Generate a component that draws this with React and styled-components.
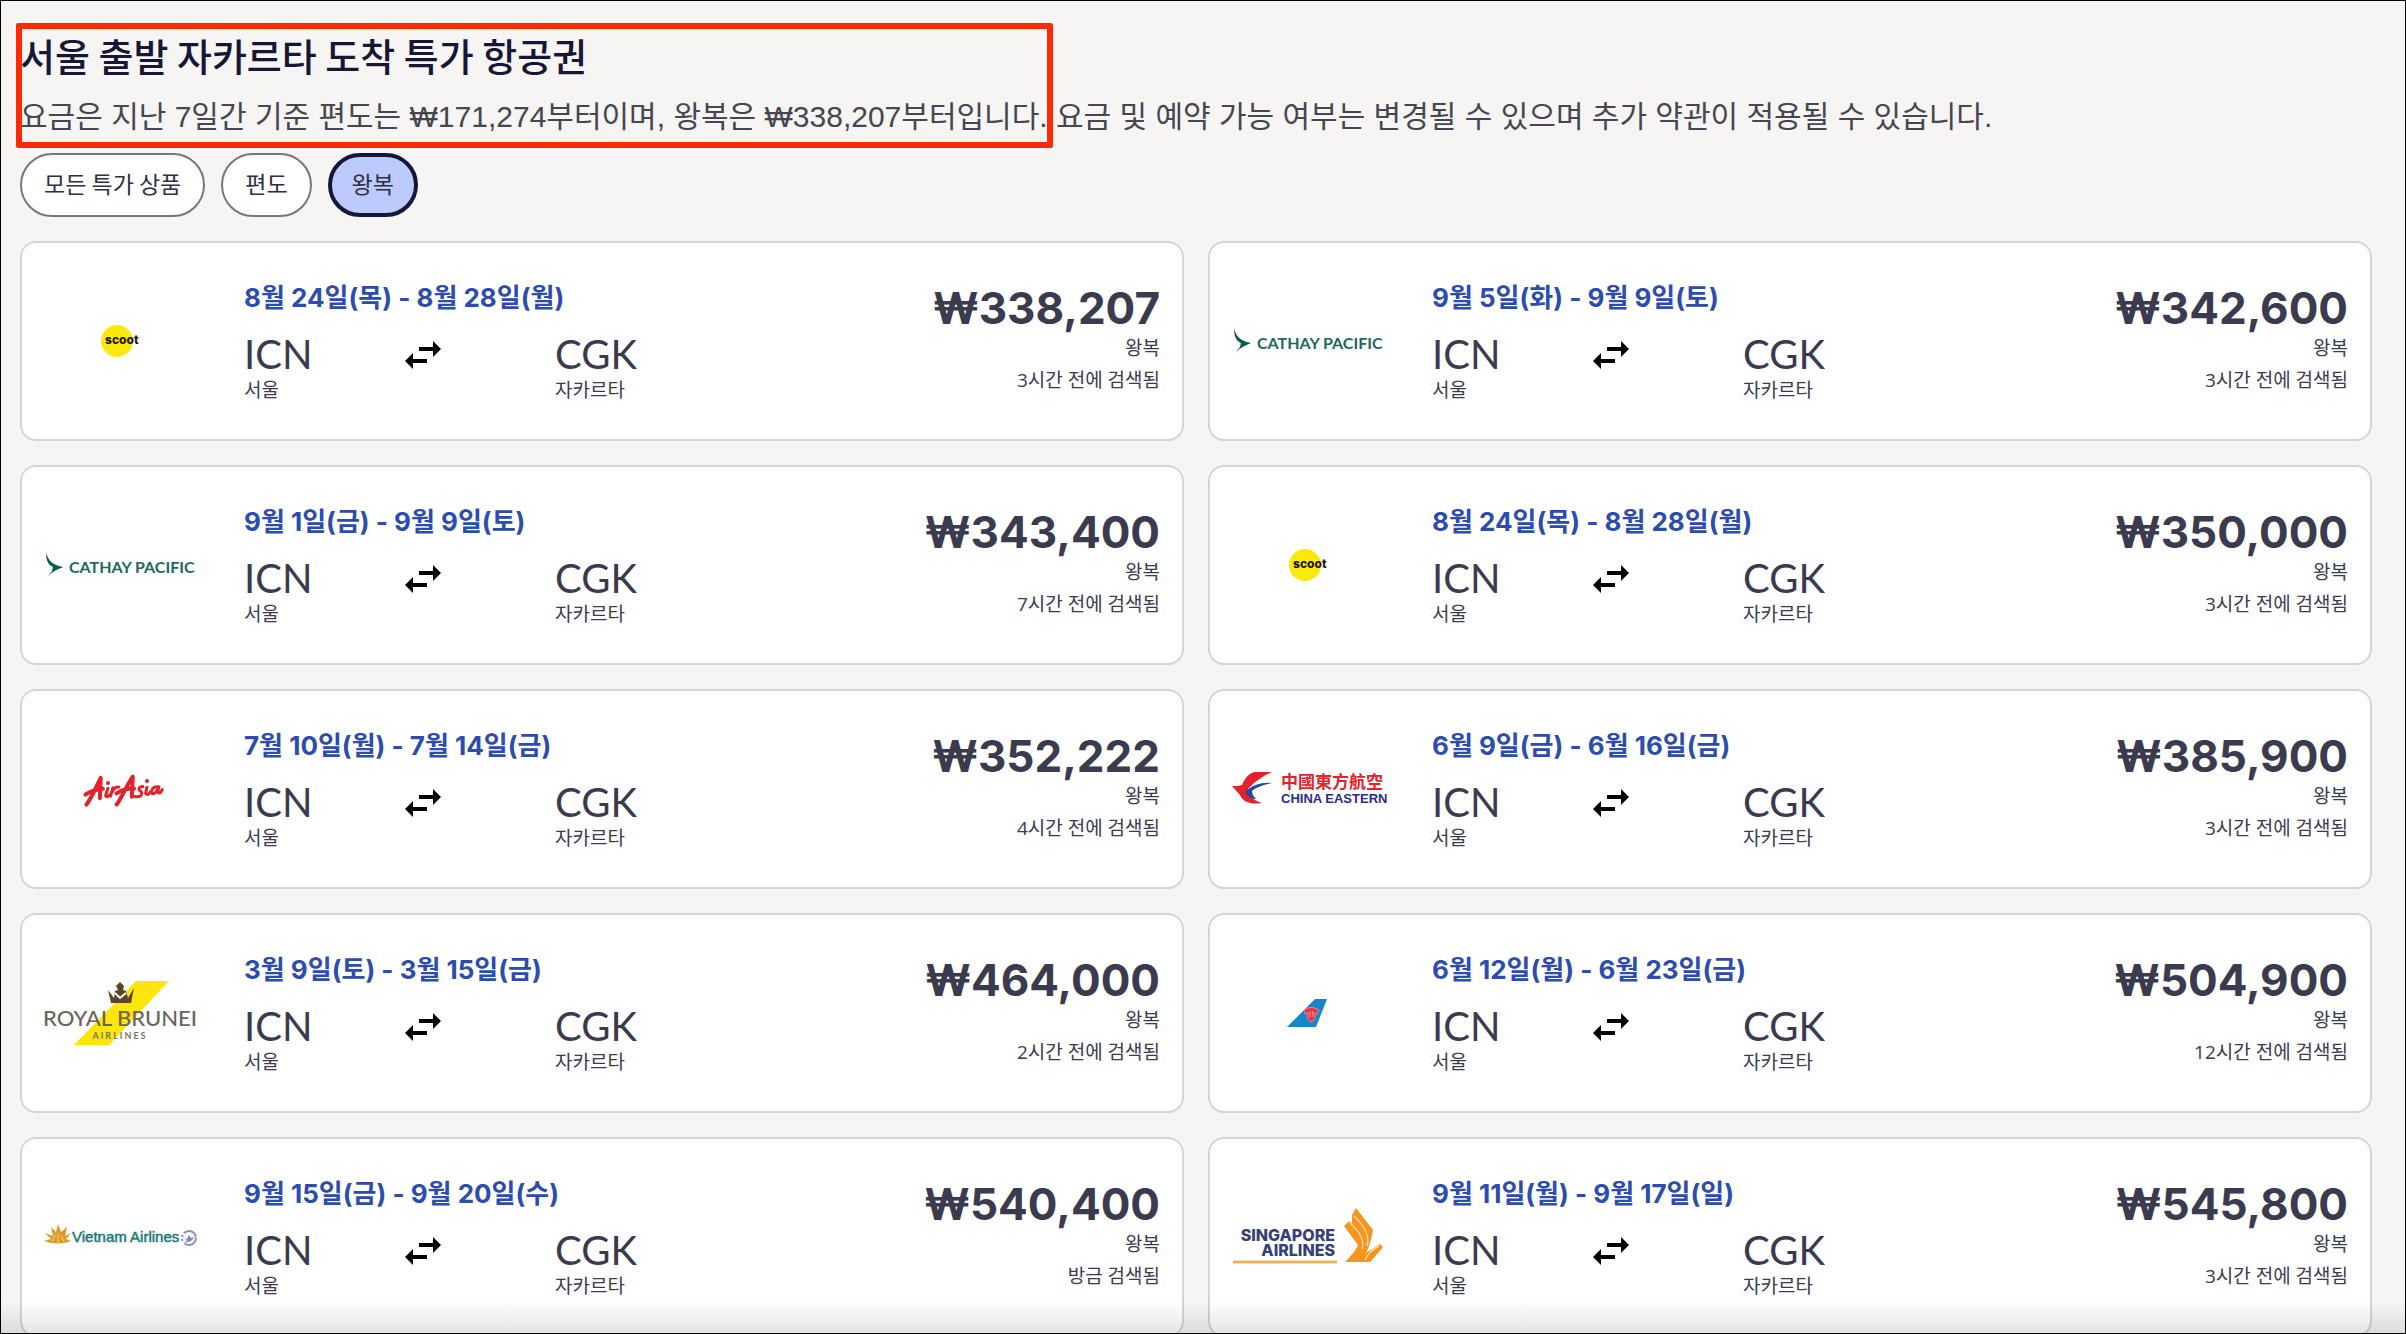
import React, { useState } from "react";
import styled, { createGlobalStyle } from "styled-components";

const GlobalStyle = createGlobalStyle`
  *, *::before, *::after {
    box-sizing: border-box;
  }

  body {
    margin: 0;
    background-color: #f6f5f4;
    color: #3a3b4e;
    font-family: Inter, "Noto Sans CJK KR", sans-serif;
  }
`;

// Styled Components
const Page = styled.main`
  position: relative;
  height: 100vh;
  padding: 30px 33px 0 19px;
  border: 1px solid #000;
  overflow: hidden;
`;

const BottomFade = styled.div`
  position: absolute;
  left: 0;
  right: 0;
  bottom: 0;
  height: 32px;
  background: linear-gradient(rgba(0, 0, 0, 0), rgba(0, 0, 0, 0.1));
  pointer-events: none;
`;

const Header = styled.header`
  position: relative;
  display: flex;
  flex-direction: column;
  gap: 18px;
`;

const Highlight = styled.div`
  position: absolute;
  top: -8px;
  left: -4px;
  width: 1037px;
  height: 125px;
  border: 6px solid #fc2b06;
  border-radius: 2px;
  pointer-events: none;
`;

const Title = styled.h2`
  margin: 0;
  font-family: "Noto Sans CJK KR", sans-serif;
  font-size: 38px;
  line-height: 48px;
  font-weight: 500;
  color: #161636;
`;

const Description = styled.p`
  margin: 0;
  font-family: "Liberation Sans", "Noto Sans CJK KR", sans-serif;
  font-size: 30px;
  line-height: 40px;
  color: #45464f;
`;

const Filters = styled.div`
  display: flex;
  gap: 16px;
  margin: 16px 0 24px;
`;

const Pill = styled.button`
  height: 64px;
  padding: 0 ${({ $active }) => ($active ? 20 : 22)}px 4px;
  border: ${({ $active }) => ($active ? "4px solid #14163c" : "2px solid #77777b")};
  border-radius: 32px;
  background-color: ${({ $active }) => ($active ? "#bccbfb" : "#fff")};
  color: #2f3043;
  font-family: "Noto Sans CJK KR", sans-serif;
  font-size: 23px;
  cursor: pointer;
`;

const Deals = styled.ul`
  display: grid;
  grid-template-columns: 1fr 1fr;
  gap: 24px;
  margin: 0;
  padding: 0;
  list-style: none;
`;

const Card = styled.li`
  display: flex;
  align-items: center;
  height: 200px;
  padding: 0 22px;
  border: 2px solid #d6d5d5;
  border-radius: 16px;
  background-color: #fff;
`;

const Logo = styled.svg`
  flex: none;
  width: 152px;
  height: 80px;
  margin-right: 48px;
  overflow: visible;
`;

const Trip = styled.div`
  flex: 1;
  padding-top: 4px;
`;

const Dates = styled.h3`
  margin: 0 0 16px;
  font-size: 26px;
  line-height: 36px;
  font-weight: 700;
  color: #2c4cae;
`;

const Route = styled.div`
  display: grid;
  grid-template-columns: 160px 151px auto;
  justify-content: start;
`;

const Code = styled.div`
  font-family: Lato, sans-serif;
  font-size: 40px;
  line-height: 44px;
`;

const City = styled.div`
  font-size: 19px;
  line-height: 30px;
`;

const Arrows = styled.svg`
  width: 38px;
  height: 44px;
`;

const Fare = styled.div`
  padding-bottom: 2px;
  text-align: right;
`;

const Price = styled.div`
  font-size: 44px;
  line-height: 48px;
  font-weight: 700;
`;

const Note = styled.div`
  font-family: "Open Sans", "Noto Sans CJK KR", sans-serif;
  font-size: 19px;
  line-height: 32px;
`;

const Scoot = () => (
  <Logo viewBox="0 0 152 80" role="img" aria-label="Scoot">
    <circle cx="73" cy="40" r="16" fill="#fbe90b" />
    <text x="61" y="43" fontSize="12" fontWeight="800" fontFamily="Inter" fill="#1d1b12">
      scoot
    </text>
  </Logo>
);

const Cathay = () => (
  <Logo viewBox="0 0 152 80" role="img" aria-label="Cathay Pacific">
    <path d="M2 27 C4 36 9 40 19 42 C13 43 9 47 4 51 C8 46 11 43 9 42 C4 40 2 35 2 27 Z" fill="#0b5c50" />
    <path d="M9 41 L19 42 L8 47 Z" fill="#0b5c50" />
    <text x="25" y="48" fontSize="16" fontWeight="700" fontFamily="Lato" fill="#1c6a5c">
      CATHAY PACIFIC
    </text>
  </Logo>
);

const AirAsia = () => (
  <Logo viewBox="0 0 152 80" role="img" aria-label="AirAsia">
    <g transform="rotate(-6 76 40)" fill="none" stroke="#e3222b" strokeWidth="3" strokeLinecap="round" strokeLinejoin="round">
      <path d="M41 52 C47 46 52 36 58 27 L55 47 M41 42 C48 38 54 38 59 38" strokeWidth="4" />
      <path d="M64 38 L61 45 Q62 48 66 44 M69 38 L66 46 M68 42 Q71 37 75 38" />
      <path d="M71 55 C77 49 82 38 90 29 L87 49 M72 44 C78 41 84 40 90 41" strokeWidth="4" />
      <path d="M99 40 Q94 40 95 43 Q99 46 96 49 Q93 50 90 49 M103 41 L101 47 Q103 50 106 46" />
      <path d="M115 42 Q109 40 107 46 Q108 51 113 45 L115 42 L113 47 Q115 50 118 45" />
    </g>
    <circle cx="64" cy="34" r="2" fill="#e3222b" />
    <circle cx="103" cy="32" r="2" fill="#e3222b" />
  </Logo>
);

const ChinaEastern = () => (
  <Logo viewBox="0 0 152 80" role="img" aria-label="China Eastern">
    <path d="M40 23 C31 27 22 33 16 40 C17 47 22 52 30 54 C19 56 11 53 8 46 L0 37 C4 37 8 37 10 36 C13 29 17 24 23 23 Z" fill="#e3222b" />
    <path d="M40 34 C30 33 20 36 13 43 C16 48 20 50 24 50 C21 47 20 44 20 42 C25 38 31 36 40 34 Z" fill="#24489d" />
    <text x="49" y="39" fontSize="17" fontWeight="700" fontFamily="'Noto Sans CJK TC'" fill="#e3222b">
      中國東方航空
    </text>
    <text x="49" y="54" fontSize="13" fontWeight="700" fontFamily="'Liberation Sans'" fill="#2a2c8a">
      CHINA EASTERN
    </text>
  </Logo>
);

const RoyalBrunei = () => (
  <Logo viewBox="0 0 152 80" role="img" aria-label="Royal Brunei Airlines">
    <path d="M92 8 L125 8 L65 72 L30 72 Z" fill="#fbe50a" />
    <path d="M64 17 L70 25 L71 18 L74 17 L72 13 L76 9 L80 13 L79 17 L82 18 L84 25 L90 15 L87 30 L67 30 Z" fill="#5a4526" />
    <path d="M71 20 L76 25 L82 20" fill="none" stroke="#fff" strokeWidth="2" />
    <text x="76" y="53" textAnchor="middle" fontSize="22" fontWeight="500" fontFamily="Lato" fill="#6b645a">
      ROYAL BRUNEI
    </text>
    <text x="76" y="66" textAnchor="middle" fontSize="9" fontWeight="700" letterSpacing="2" fontFamily="Lato" fill="#7d7360">
      AIRLINES
    </text>
  </Logo>
);

const ChinaSouthern = () => (
  <Logo viewBox="0 0 152 80" role="img" aria-label="China Southern">
    <path d="M83 26 L95 26 L84 54 L55 54 Z" fill="#1487c9" />
    <path d="M72 37 Q79 32 87 37 L85 41 L83 40 Q84 47 79 49 Q74 46 76 40 L73 41 Z" fill="#e8343f" stroke="#f08a98" strokeWidth="1" />
    <path d="M78 38 L78 44 M81 38 L81 44" stroke="#f59aa2" strokeWidth="1" />
  </Logo>
);

const VietnamAirlines = () => (
  <Logo viewBox="0 0 152 80" role="img" aria-label="Vietnam Airlines">
    <path d="M0 44 L7 42 L1 36 L9 39 L7 30 L12 35 L14 27 L17 35 L23 30 L21 39 L27 36 L22 42 L27 44 Q14 49 0 44 Z" fill="#dc9a26" />
    <path d="M8 45 L11 38 M14 46 L14 36 M20 45 L17 38" stroke="#f3d18b" strokeWidth="1" />
    <text x="28" y="45" fontSize="15" fontFamily="'Liberation Sans'" fill="#167a77" stroke="#167a77" strokeWidth="0.5">
      Vietnam Airlines
    </text>
    <circle cx="145" cy="41" r="7" fill="none" stroke="#8c8fd0" strokeWidth="2" strokeDasharray="16 3 2 2 2 2" />
    <path d="M139 41 L143 42 L145 38 L147 41 L151 40 L147 44 L141 46 L143 43 Z" fill="#7d85cd" />
  </Logo>
);

const SingaporeAirlines = () => (
  <Logo viewBox="0 -2 152 80" role="img" aria-label="Singapore Airlines">
    <text x="103" y="42" textAnchor="end" fontSize="16" fontWeight="800" fontFamily="Inter" fill="#344078">
      SINGAPORE
    </text>
    <text x="103" y="57" textAnchor="end" fontSize="16" fontWeight="800" fontFamily="Inter" fill="#344078">
      AIRLINES
    </text>
    <path d="M1 63 H105" stroke="#e9b45a" strokeWidth="3" />
    <path d="M124 9 L141 31 Q139 44 134 54 L148 45 L151 48 Q143 58 138 63 L113 63 Q124 52 126 46 L112 27 L117 22 L120 24 L120 16 Z" fill="#f5951f" />
    <path d="M117 23 Q134 38 130 50 M122 17 Q139 33 135 47 M133 61 Q137 52 147 47" fill="none" stroke="#fcd49b" strokeWidth="1.5" />
  </Logo>
);

const deals = [
  { logo: Scoot, dates: "8월 24일(목) - 8월 28일(월)", price: "₩338,207", found: "3시간 전에 검색됨" },
  { logo: Cathay, dates: "9월 5일(화) - 9월 9일(토)", price: "₩342,600", found: "3시간 전에 검색됨" },
  { logo: Cathay, dates: "9월 1일(금) - 9월 9일(토)", price: "₩343,400", found: "7시간 전에 검색됨" },
  { logo: Scoot, dates: "8월 24일(목) - 8월 28일(월)", price: "₩350,000", found: "3시간 전에 검색됨" },
  { logo: AirAsia, dates: "7월 10일(월) - 7월 14일(금)", price: "₩352,222", found: "4시간 전에 검색됨" },
  { logo: ChinaEastern, dates: "6월 9일(금) - 6월 16일(금)", price: "₩385,900", found: "3시간 전에 검색됨" },
  { logo: RoyalBrunei, dates: "3월 9일(토) - 3월 15일(금)", price: "₩464,000", found: "2시간 전에 검색됨" },
  { logo: ChinaSouthern, dates: "6월 12일(월) - 6월 23일(금)", price: "₩504,900", found: "12시간 전에 검색됨" },
  { logo: VietnamAirlines, dates: "9월 15일(금) - 9월 20일(수)", price: "₩540,400", found: "방금 검색됨" },
  { logo: SingaporeAirlines, dates: "9월 11일(월) - 9월 17일(일)", price: "₩545,800", found: "3시간 전에 검색됨" },
];

const filters = ["모든 특가 상품", "편도", "왕복"];

const Deal = ({ logo: AirlineLogo, dates, price, found }) => {
  return (
    <Card>
      <AirlineLogo />
      <Trip>
        <Dates>{dates}</Dates>
        <Route>
          <div>
            <Code>ICN</Code>
            <City>서울</City>
          </div>
          <Arrows viewBox="0 0 38 44" aria-hidden="true">
            <path d="M15 15 H29 V9 L37 17 L29 25 V19 H15 Z" />
            <path d="M23 31 H9 V37 L1 29 L9 21 V27 H23 Z" />
          </Arrows>
          <div>
            <Code>CGK</Code>
            <City>자카르타</City>
          </div>
        </Route>
      </Trip>
      <Fare>
        <Price>{price}</Price>
        <Note>왕복</Note>
        <Note>{found}</Note>
      </Fare>
    </Card>
  );
};

const App = () => {
  const [active, setActive] = useState("왕복");

  return (
    <>
      <GlobalStyle />
      <Page>
        {/* Heading Section */}
        <Header>
          <Title>서울 출발 자카르타 도착 특가 항공권</Title>
          <Description>
            요금은 지난 7일간 기준 편도는 ₩171,274부터이며, 왕복은 ₩338,207부터입니다. 요금 및 예약 가능 여부는 변경될 수
            있으며 추가 약관이 적용될 수 있습니다.
          </Description>
          <Highlight />
        </Header>

        {/* Filters */}
        <Filters>
          {filters.map((name) => (
            <Pill key={name} type="button" $active={active === name} aria-pressed={active === name} onClick={() => setActive(name)}>
              {name}
            </Pill>
          ))}
        </Filters>

        {/* Deals */}
        <Deals>
          {deals.map((deal) => (
            <Deal key={deal.price} {...deal} />
          ))}
        </Deals>
        <BottomFade />
      </Page>
    </>
  );
};

export default App;
